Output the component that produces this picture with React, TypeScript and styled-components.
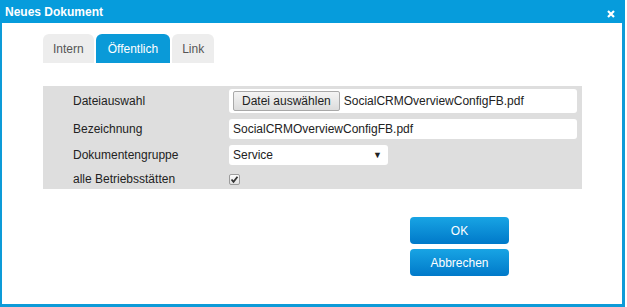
import { useState } from 'react';
import styled, { createGlobalStyle } from 'styled-components';

const GlobalStyle = createGlobalStyle`
    html, body {
        margin: 0;
        padding: 0;
        background: #ffffff;
        font-family: 'Liberation Sans', Arial, sans-serif;
    }
`;

const Dialog = styled.div`
    width: 625px;
    height: 307px;
    box-sizing: border-box;
    display: flex;
    flex-direction: column;
    border-left: 2px solid #0d9bd8;
    border-right: 3px solid #0d9bd8;
    border-bottom: 3px solid #0d9bd8;
    background: #ffffff;
`;

const TitleBar = styled.div`
    height: 23px;
    margin: 0 -3px 0 -2px;
    padding: 0 10px 0 5px;
    display: flex;
    align-items: center;
    justify-content: space-between;
    background: #069cdc;
    color: #ffffff;
    font-size: 12px;
    font-weight: 700;
`;

const CloseButton = styled.button`
    border: 0;
    padding: 0;
    background: none;
    display: flex;
    cursor: pointer;
    margin-top: 4px;
`;

const Content = styled.div`
    padding: 11px 0 0 41px;
    display: flex;
    flex-direction: column;
`;

const Tabs = styled.div`
    display: flex;
    gap: 2px;
    height: 29px;
`;

const Tab = styled.button<{ $active?: boolean }>`
    border: 0;
    border-radius: 6px 6px 0 0;
    padding: 0 ${p => (p.$active ? '12px' : '10px')};
    font-family: inherit;
    font-size: 12px;
    cursor: pointer;
    color: ${p => (p.$active ? '#ffffff' : '#555555')};
    background: ${p => (p.$active ? '#0a9ad8' : '#ededed')};
`;

const Panel = styled.div`
    margin-top: 23px;
    width: 539px;
    box-sizing: border-box;
    padding: 3px 5px 2px 0;
    display: grid;
    grid-template-columns: 186px 1fr;
    grid-template-rows: 24px 20px 20px 16px;
    row-gap: 6px;
    background: #dedede;
    font-size: 12px;
    color: #222222;
`;

const Label = styled.div`
    padding-left: 30px;
    display: flex;
    align-items: center;
`;

const Field = styled.div<{ $width?: number }>`
    display: flex;
    align-items: center;
    gap: 4px;
    box-sizing: border-box;
    width: ${p => (p.$width ? `${p.$width}px` : 'auto')};
    padding: 0 4px;
    background: #ffffff;
    border-radius: 3px;
`;

const FileButton = styled.button`
    height: 20px;
    padding: 0 8px;
    font-family: inherit;
    font-size: 12px;
    color: #222222;
    border: 1px solid #a9a9a9;
    border-radius: 2px;
    background: linear-gradient(#f4f4f4, #dcdcdc);
`;

const SelectBox = styled(Field)`
    justify-content: space-between;
    padding-right: 6px;
    cursor: pointer;
`;

const Arrow = styled.span`
    font-size: 9px;
`;

const CheckCell = styled.div`
    display: flex;
    align-items: center;
`;

const CheckBox = styled.span`
    width: 11px;
    height: 11px;
    box-sizing: border-box;
    border: 1px solid #9c9c9c;
    border-radius: 2px;
    background: linear-gradient(#fbfbfb, #e2e2e2);
    display: flex;
    align-items: center;
    justify-content: center;
`;

const Actions = styled.div`
    margin-top: 28px;
    margin-left: 367px;
    display: flex;
    flex-direction: column;
    gap: 5px;
`;

const ActionButton = styled.button`
    width: 99px;
    height: 27px;
    border: 0;
    border-radius: 4px;
    font-family: inherit;
    font-size: 12px;
    color: #ffffff;
    cursor: pointer;
    background: linear-gradient(#18a4e4, #0079c9);
`;

const tabs = ['Intern', 'Öffentlich', 'Link'];

const App = () => {
    const [activeTab, setActiveTab] = useState('Öffentlich');

    return (
        <>
            <GlobalStyle />
            <Dialog>
                <TitleBar>
                    Neues Dokument
                    <CloseButton aria-label="Schließen">
                        <svg width="8" height="8" viewBox="0 0 8 8">
                            <path d="M1 1 L7 7 M7 1 L1 7" stroke="#ffffff" strokeWidth="2.2" />
                        </svg>
                    </CloseButton>
                </TitleBar>
                <Content>
                    <Tabs>
                        {tabs.map(tab => (
                            <Tab key={tab} $active={tab === activeTab} onClick={() => setActiveTab(tab)}>
                                {tab}
                            </Tab>
                        ))}
                    </Tabs>
                    <Panel>
                        <Label>Dateiauswahl</Label>
                        <Field>
                            <FileButton>Datei auswählen</FileButton>
                            SocialCRMOverviewConfigFB.pdf
                        </Field>
                        <Label>Bezeichnung</Label>
                        <Field>SocialCRMOverviewConfigFB.pdf</Field>
                        <Label>Dokumentengruppe</Label>
                        <SelectBox $width={159}>
                            Service
                            <Arrow>▼</Arrow>
                        </SelectBox>
                        <Label>alle Betriebsstätten</Label>
                        <CheckCell>
                            <CheckBox>
                                <svg width="9" height="9" viewBox="0 0 9 9">
                                    <path d="M1.5 4.5 L3.5 6.8 L7.5 1.8" fill="none" stroke="#333333" strokeWidth="1.8" />
                                </svg>
                            </CheckBox>
                        </CheckCell>
                    </Panel>
                    <Actions>
                        <ActionButton>OK</ActionButton>
                        <ActionButton>Abbrechen</ActionButton>
                    </Actions>
                </Content>
            </Dialog>
        </>
    );
};

export default App;
